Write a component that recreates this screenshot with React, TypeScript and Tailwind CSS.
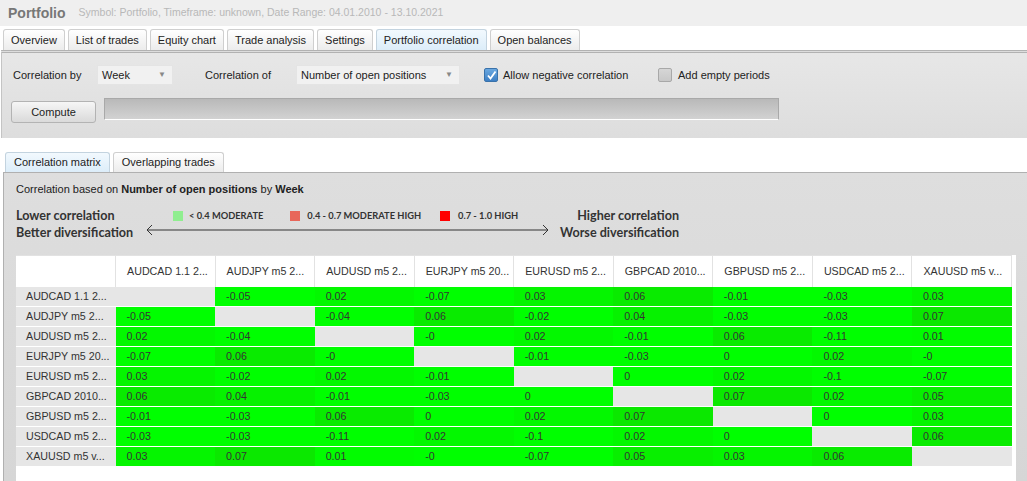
import React from "react";

const names = [
  "AUDCAD 1.1 2...",
  "AUDJPY m5 2...",
  "AUDUSD m5 2...",
  "EURJPY m5 20...",
  "EURUSD m5 2...",
  "GBPCAD 2010...",
  "GBPUSD m5 2...",
  "USDCAD m5 2...",
  "XAUUSD m5 v...",
];

const data: (string | null)[][] = [
  [null, "-0.05", "0.02", "-0.07", "0.03", "0.06", "-0.01", "-0.03", "0.03"],
  ["-0.05", null, "-0.04", "0.06", "-0.02", "0.04", "-0.03", "-0.03", "0.07"],
  ["0.02", "-0.04", null, "-0", "0.02", "-0.01", "0.06", "-0.11", "0.01"],
  ["-0.07", "0.06", "-0", null, "-0.01", "-0.03", "0", "0.02", "-0"],
  ["0.03", "-0.02", "0.02", "-0.01", null, "0", "0.02", "-0.1", "-0.07"],
  ["0.06", "0.04", "-0.01", "-0.03", "0", null, "0.07", "0.02", "0.05"],
  ["-0.01", "-0.03", "0.06", "0", "0.02", "0.07", null, "0", "0.03"],
  ["-0.03", "-0.03", "-0.11", "0.02", "-0.1", "0.02", "0", null, "0.06"],
  ["0.03", "0.07", "0.01", "-0", "-0.07", "0.05", "0.03", "0.06", null],
];

function cellColor(v: string): string {
  const n = Math.max(0, parseFloat(v));
  const r = Math.round(n * 150);
  const g = Math.round(255 - n * 330);
  return `rgb(${r},${g},0)`;
}

const tabs = [
  "Overview",
  "List of trades",
  "Equity chart",
  "Trade analysis",
  "Settings",
  "Portfolio correlation",
  "Open balances",
];

function Select({ value, width }: { value: string; width: string }) {
  return (
    <div
      className={`${width} h-[20px] bg-[#f1f1f1] border border-[#e4e4e4] flex items-center justify-between pl-[4px] pr-[6px] text-[11px] text-[#222]`}
    >
      <span>{value}</span>
      <span className="text-[8px] text-[#888]">▼</span>
    </div>
  );
}

export default function App() {
  return (
    <div className="w-[1027px] h-[481px] overflow-hidden bg-white font-['Liberation_Sans',Arial,sans-serif] text-[11px] text-[#222] flex flex-col">
      {/* Header */}
      <div className="h-[26px] bg-[#efefef] flex items-center pl-[8px] shrink-0">
        <span className="text-[14px] font-bold text-[#777]">Portfolio</span>
        <span className="ml-[13px] text-[10.5px] text-[#b8b8b8]">
          Symbol: Portfolio, Timeframe: unknown, Date Range: 04.01.2010 - 13.10.2021
        </span>
      </div>

      {/* Tab strip */}
      <div className="h-[24px] bg-white flex items-end gap-[3px] pl-[3px] shrink-0">
        {tabs.map((t) => (
          <div
            key={t}
            className={`h-[21px] px-[7px] flex items-center border border-b-0 rounded-t-[3px] text-[11px] text-[#222] ${
              t === "Portfolio correlation"
                ? "bg-gradient-to-b from-[#f2f9fe] to-[#dcedf9] border-[#c3d3df]"
                : "bg-gradient-to-b from-[#ffffff] to-[#ececec] border-[#cfcfcf]"
            }`}
          >
            {t}
          </div>
        ))}
      </div>

      {/* Options panel */}
      <div className="border-t-[3px] border-double border-[#b2b2b2] ml-[1px] border-l border-l-[#c4c4c4] bg-gradient-to-b from-[#e7e7e7] to-[#dddddd] h-[88px] shrink-0">
        <div className="flex items-center h-[20px] mt-[12px] pl-[11px]">
          <span className="w-[84px]">Correlation by</span>
          <Select value="Week" width="w-[76px]" />
          <span className="ml-[32px] w-[91px]">Correlation of</span>
          <Select value="Number of open positions" width="w-[164px]" />
          <div className="ml-[24px] w-[14px] h-[14px] rounded-[2px] bg-gradient-to-b from-[#6aa8e0] to-[#3d7fc4] border border-[#3a72aa] flex items-center justify-center">
            <svg width="11" height="11" viewBox="0 0 11 11">
              <path d="M2 5.5 L4.5 8.5 L9.5 1.5" stroke="white" strokeWidth="1.8" fill="none" />
            </svg>
          </div>
          <span className="ml-[5px] w-[155px]">Allow negative correlation</span>
          <div className="w-[14px] h-[14px] rounded-[2px] bg-gradient-to-b from-[#d6d6d6] to-[#c8c8c8] border border-[#a8a8a8]" />
          <span className="ml-[6px]">Add empty periods</span>
        </div>
        <div className="flex items-start mt-[13px] pl-[9px]">
          <div className="mt-[3px] w-[85px] h-[22px] rounded-[3px] border border-[#b3b3b3] bg-gradient-to-b from-[#f6f6f6] to-[#dadada] flex items-center justify-center text-[11px]">
            Compute
          </div>
          <div className="ml-[8px] w-[675px] h-[22px] border border-[#a9a9a9] border-b-white bg-gradient-to-b from-[#b9b9b9] to-[#d2d2d2]" />
        </div>
      </div>

      {/* spacer */}
      <div className="h-[13px] bg-white shrink-0" />

      {/* Sub tabs */}
      <div className="h-[21px] flex items-end gap-[3px] pl-[5px] shrink-0">
        <div className="h-[20px] px-[8px] flex items-center border border-b-0 border-[#c3d3df] rounded-t-[3px] bg-gradient-to-b from-[#f2f9fe] to-[#dcedf9] text-[11px]">
          Correlation matrix
        </div>
        <div className="h-[20px] px-[8px] flex items-center border border-b-0 border-[#cfcfcf] rounded-t-[3px] bg-gradient-to-b from-[#ffffff] to-[#ececec] text-[11px]">
          Overlapping trades
        </div>
      </div>

      {/* Sub panel */}
      <div className="flex-1 ml-[3px] border-l border-t border-[#b0b0b0] bg-gradient-to-b from-[#dedede] to-[#d6d6d6] flex flex-col">
        <div className="mt-[8px] pl-[12px] h-[16px] flex items-center text-[11px] text-[#222]">
          Correlation based on&nbsp;<b>Number of open positions</b>&nbsp;by&nbsp;<b>Week</b>
        </div>

        {/* Legend */}
        <div className="mt-[10px] pl-[12px] flex font-['Lato',sans-serif] text-[#333]">
          <div className="w-[130px] flex flex-col font-bold text-[12.6px] leading-[17px]">
            <span>Lower correlation</span>
            <span>Better diversification</span>
          </div>
          <div className="w-[404px] flex flex-col">
            <div className="h-[17px] flex items-center pl-[27px] text-[9.3px] font-bold">
              <span className="w-[10px] h-[10px] bg-[#90ee90]" />
              <span className="ml-[6px]">&lt; 0.4 MODERATE</span>
              <span className="ml-[27px] w-[10px] h-[10px] bg-[#e8675a]" />
              <span className="ml-[7px]">0.4 - 0.7 MODERATE HIGH</span>
              <span className="ml-[19px] w-[10px] h-[10px] bg-[#ff0000]" />
              <span className="ml-[8px]">0.7 - 1.0 HIGH</span>
            </div>
            <svg width="404" height="12" viewBox="0 0 404 12">
              <line x1="1" y1="6" x2="402" y2="6" stroke="#333" strokeWidth="1" />
              <path d="M6 1 L1 6 L6 11" stroke="#333" strokeWidth="1" fill="none" />
              <path d="M397 1 L402 6 L397 11" stroke="#333" strokeWidth="1" fill="none" />
            </svg>
          </div>
          <div className="w-[129px] flex flex-col items-end font-bold text-[12.6px] leading-[17px]">
            <span>Higher correlation</span>
            <span>Worse diversification</span>
          </div>
        </div>

        {/* Matrix */}
        <div className="mt-[14px] ml-[12px] w-[1000px] flex-1 bg-white">
          <table className="table-fixed w-[996px] border-collapse text-[10.7px] text-[#333]">
            <thead>
              <tr className="h-[31px]">
                <th className="border-t border-r border-[#e2e2e2] bg-white" />
                {names.map((n) => (
                  <th
                    key={n}
                    className="border-t border-r border-[#e2e2e2] bg-white text-left font-normal pl-[11px] whitespace-nowrap overflow-hidden"
                  >
                    {n}
                  </th>
                ))}
              </tr>
            </thead>
            <tbody>
              {names.map((n, i) => (
                <tr key={n} className="h-[20px]">
                  <td className="bg-[#e6e6e6] border-b border-white pl-[10px] whitespace-nowrap overflow-hidden">
                    {n}
                  </td>
                  {data[i].map((v, j) =>
                    v === null ? (
                      <td key={j} className="bg-[#e6e6e6] border-b border-white" />
                    ) : (
                      <td
                        key={j}
                        className="border-b border-white pl-[11px]"
                        style={{ backgroundColor: cellColor(v) }}
                      >
                        {v}
                      </td>
                    )
                  )}
                </tr>
              ))}
            </tbody>
          </table>
        </div>
      </div>
    </div>
  );
}
